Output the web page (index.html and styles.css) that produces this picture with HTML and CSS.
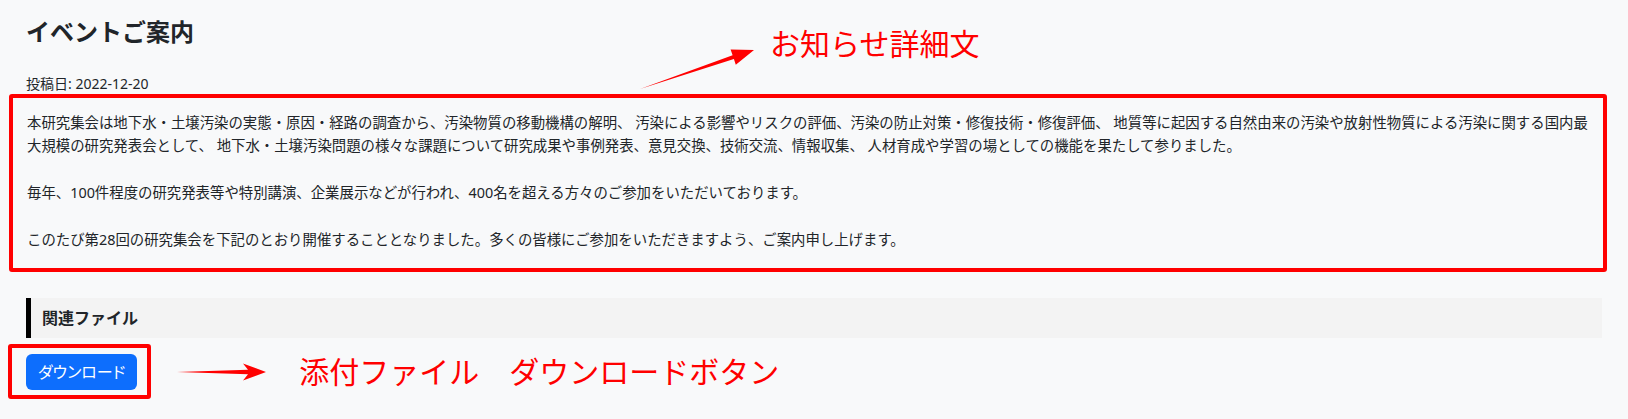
FILE: index.html
```html
<!DOCTYPE html>
<html lang="ja">
<head>
    <meta charset="UTF-8">
    <meta name="viewport" content="width=device-width, initial-scale=1.0">
    <title>イベントご案内</title>
    <link rel="stylesheet" href="styles.css">
</head>
<body>
    <div class="page">
        <h1 class="title">イベントご案内</h1>
        <p class="posted">投稿日: 2022-12-20</p>

        <div class="frame detail-frame">
            <div class="detail-text">
                <p>本研究集会は地下水・土壌汚染の実態・原因・経路の調査から、汚染物質の移動機構の解明、 汚染による影響やリスクの評価、汚染の防止対策・修復技術・修復評価、 地質等に起因する自然由来の汚染や放射性物質による汚染に関する国内最大規模の研究発表会として、 地下水・土壌汚染問題の様々な課題について研究成果や事例発表、意見交換、技術交流、情報収集、 人材育成や学習の場としての機能を果たして参りました。</p>
                <p>毎年、100件程度の研究発表等や特別講演、企業展示などが行われ、400名を超える方々のご参加をいただいております。</p>
                <p>このたび第28回の研究集会を下記のとおり開催することとなりました。多くの皆様にご参加をいただきますよう、ご案内申し上げます。</p>
            </div>
        </div>

        <h2 class="related-head">関連ファイル</h2>

        <div class="dl-row">
            <div class="frame dl-frame">
                <button class="btn" type="button">ダウンロード</button>
            </div>
            <svg class="note-arrow" width="90" height="20" viewBox="0 0 90 20">
                <polygon points="0,10 71,7.8 66,1.5 89,10 66,18.5 71,12.2" fill="#ff0000"/>
            </svg>
            <span class="note-text">添付ファイル　ダウンロードボタン</span>
        </div>

        <!-- annotation over the detail text -->
        <div class="callout">
            <svg class="callout-arrow" width="130" height="55" viewBox="0 0 130 55">
                <polygon points="10,49 102.6,15.2 100.6,9.5 124,10 105.8,24.7 103.9,19" fill="#ff0000"/>
            </svg>
            <span class="note-text">お知らせ詳細文</span>
        </div>
    </div>
</body>
</html>
```

FILE: styles.css
```css
body {
    margin: 0;
    background-color: #f8f9fa;
    color: #212529;
    font-family: "Noto Sans", "Noto Sans CJK JP", sans-serif;
}
.page {
    position: relative;
    padding: 18px 26px 0 26px;
}
.title {
    font-size: 24px;
    font-weight: 700;
    line-height: 1.2;
    margin: 0 0 26px;
}
.posted {
    font-size: 14px;
    line-height: 21px;
    margin: 0;
}
.frame {
    border: 4px solid #ff0000;
    border-radius: 3px;
}
.detail-frame {
    margin: 0 -5px 0 -17px;
    padding: 13px 8px 17px 14px;
}
.detail-text {
    font-size: 14.4px;
    line-height: 23.4px;
}
.detail-text p {
    margin: 0 0 23.4px;
}
.detail-text p:last-child {
    margin-bottom: 0;
}
.related-head {
    margin: 26px 0 0;
    padding: 0 11px;
    height: 40px;
    line-height: 40px;
    font-size: 16px;
    font-weight: 700;
    background-color: #f3f3f3;
    border-left: 5px solid #000;
}
.dl-row {
    display: flex;
    align-items: center;
    margin-top: 6px;
}
.dl-frame {
    margin-left: -18px;
    padding: 6px 10px 5px 14px;
}
.btn {
    display: block;
    height: 36px;
    padding: 0 12px;
    border: none;
    border-radius: 6px;
    background-color: #0d6efd;
    color: #fff;
    font-family: inherit;
    font-size: 16px;
    line-height: 36px;
    font-feature-settings: "palt";
    cursor: pointer;
}
.note-arrow {
    margin-left: 26px;
}
.note-text {
    color: #ff0000;
    font-size: 30px;
    line-height: 1;
    white-space: nowrap;
}
.dl-row .note-text {
    margin-left: 32px;
}
.callout {
    position: absolute;
    left: 630px;
    top: 29px;
    display: flex;
    align-items: flex-start;
}
.callout-arrow {
    margin-top: 11px;
}
.callout .note-text {
    margin-left: 10px;
}
```
